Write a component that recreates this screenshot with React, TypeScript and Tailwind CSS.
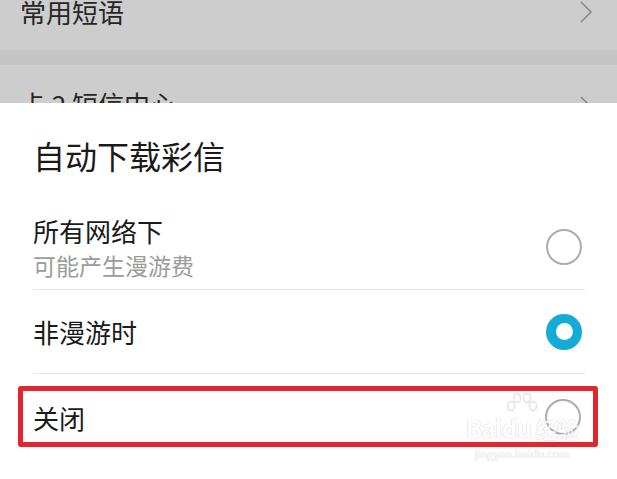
import { ReactNode } from "react";

const font = { fontFamily: '"Noto Sans CJK SC", "Noto Sans", sans-serif' };

export default function App() {
  return (
    <div className="relative flex h-[479px] w-[617px] flex-col overflow-hidden bg-white" style={font}>
      {/* dimmed settings list behind the sheet */}
      <div className="h-[103px] shrink-0 overflow-hidden bg-[#cdcdcd]">
        <div className="flex h-[50px] items-start justify-between pl-[20px] pr-[24px]">
          <span className="-mt-[3px] text-[26px] leading-[30px] text-[#262626]">常用短语</span>
          <Chevron />
        </div>
        <div className="h-[15px] bg-[#c5c5c5]" />
        <div className="flex items-start justify-between pl-[20px] pr-[24px] pt-[24px]">
          <span className="text-[26px] leading-[30px] text-[#262626]">卡 2 短信中心</span>
          <div className="mt-[6px]">
            <Chevron />
          </div>
        </div>
      </div>

      {/* bottom sheet */}
      <div className="flex flex-1 flex-col bg-white">
        <h1 className="pl-[33px] pt-[37px] text-[32px] font-normal leading-[30px] text-[#1a1a1a]">自动下载彩信</h1>

        <Row className="mt-[46px] pb-[11px]" selected={false}>
          <div>
            <div className="text-[26px] leading-[30px] text-[#1a1a1a]">所有网络下</div>
            <div className="mt-[6px] text-[23px] leading-[26px] text-[#9b9b9b]">可能产生漫游费</div>
          </div>
        </Row>
        <Divider />

        <Row className="h-[83px]" selected>
          <div className="text-[26px] leading-[28px] text-[#1a1a1a]">非漫游时</div>
        </Row>
        <Divider />

        <div className="ml-[18px] mt-[12px] flex h-[61px] w-[580px] items-center justify-between rounded-[3px] border-[5px] border-[#e0262f] pl-[10px] pr-[12px]">
          <div className="mt-[2px] text-[26px] leading-[28px] text-[#1a1a1a]">关闭</div>
          <Radio selected={false} />
        </div>
      </div>

      {/* watermark */}
      <div className="pointer-events-none absolute left-[458px] top-[392px] flex w-[128px] flex-col items-center opacity-70">
        <svg width="40" height="24" viewBox="0 0 40 24" fill="none" stroke="#d6d6d6" strokeWidth="1.5">
          <ellipse cx="9" cy="14" rx="3.5" ry="4.5" />
          <ellipse cx="15" cy="6" rx="3.5" ry="4.5" />
          <ellipse cx="25" cy="6" rx="3.5" ry="4.5" />
          <ellipse cx="31" cy="14" rx="3.5" ry="4.5" />
        </svg>
        <div
          className="-mt-[2px] whitespace-nowrap text-[24px] font-bold leading-[28px] tracking-tight text-white"
          style={{ textShadow: "0 0 1px #bdbdbd, 0 0 1px #bdbdbd" }}
        >
          Baidu<span className="ml-[4px] text-[22px]">经验</span>
        </div>
        <div
          className="mt-[4px] whitespace-nowrap text-[11px] leading-[14px] text-white"
          style={{ textShadow: "0 0 1px #c4c4c4, 0 0 1px #c4c4c4" }}
        >
          jingyan.baidu.com
        </div>
      </div>
    </div>
  );
}

function Row({ children, selected, className }: { children: ReactNode; selected: boolean; className?: string }) {
  return (
    <div className={`flex items-center justify-between pl-[33px] pr-[35px] ${className ?? ""}`}>
      {children}
      <Radio selected={selected} />
    </div>
  );
}

function Radio({ selected }: { selected: boolean }) {
  if (selected) {
    return (
      <div className="flex h-[36px] w-[36px] items-center justify-center rounded-full bg-[#14acd6]">
        <div className="h-[17px] w-[17px] rounded-full bg-white" />
      </div>
    );
  }
  return <div className="h-[36px] w-[36px] rounded-full border-2 border-[#acacac]" />;
}

function Divider() {
  return <div className="ml-[33px] mr-[32px] h-px bg-[#e6e6e6]" />;
}

function Chevron() {
  return (
    <svg width="14" height="24" viewBox="0 0 14 24" fill="none" stroke="#8a8a8a" strokeWidth="1.6">
      <path d="M2 2 L12 12 L2 22" />
    </svg>
  );
}
